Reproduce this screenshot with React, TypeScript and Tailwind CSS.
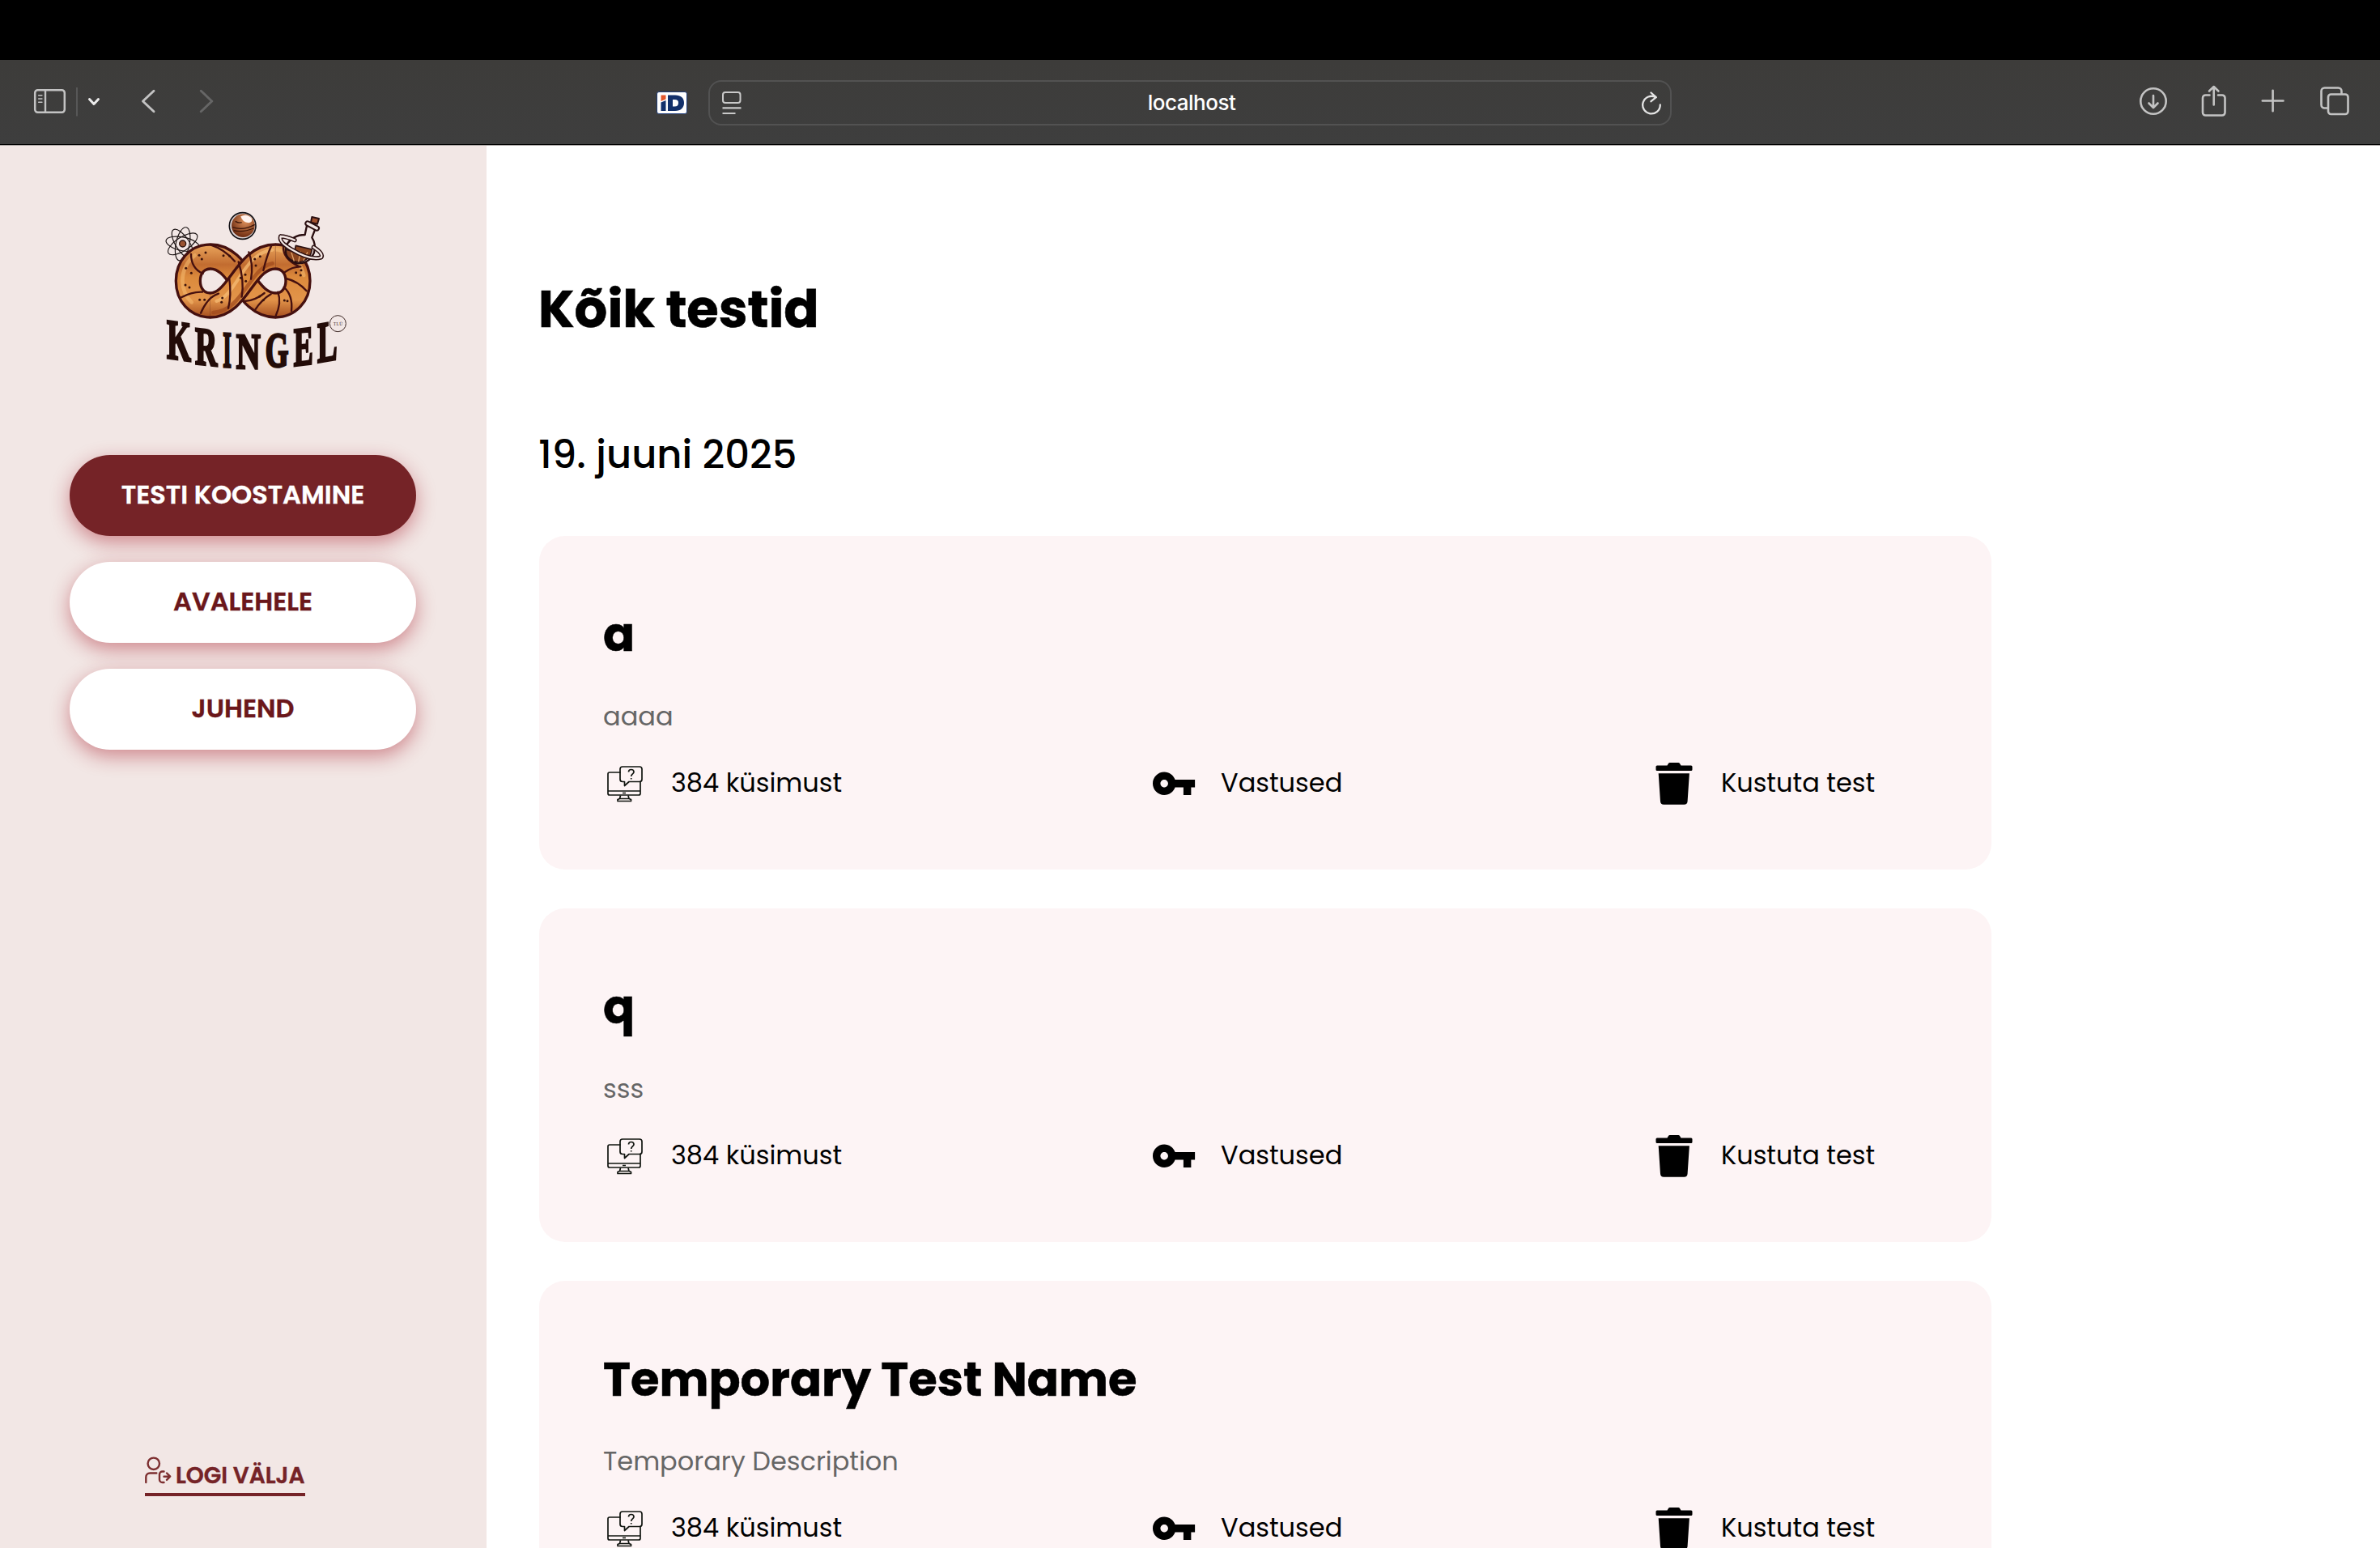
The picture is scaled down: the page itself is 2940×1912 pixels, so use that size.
import React from 'react';

function Logo({ className }: { className: string }) {
  const rope =
    'M481 411 C370 411 350 231 240 231 C190 231 157 270 157 321 C157 372 190 411 240 411';
  const right = 'M480 231 C530 231 564 270 564 321 C564 372 530 411 480 411';
  const over = 'M239 411 C345 411 365 231 481 231';
  const letters = [
    { c: 'K', x: 78, y: 606, w: 90, s: 209, k: 8 },
    { c: 'R', x: 183, y: 628, w: 82, s: 199, k: 6 },
    { c: 'I', x: 286, y: 639, w: 32, s: 189, k: 3 },
    { c: 'N', x: 335, y: 644, w: 90, s: 187, k: 1 },
    { c: 'G', x: 443, y: 640, w: 86, s: 181, k: -2 },
    { c: 'E', x: 548, y: 636, w: 72, s: 203, k: -7 },
    { c: 'L', x: 636, y: 623, w: 74, s: 213, k: -10 },
  ];
  return (
    <svg viewBox="0 0 810 720" className={className}>
      <defs>
        <linearGradient id="dough" gradientUnits="userSpaceOnUse" x1="0" y1="183" x2="0" y2="460">
          <stop offset="0" stopColor="#eca85e" />
          <stop offset="0.28" stopColor="#c26c30" />
          <stop offset="0.45" stopColor="#dc8a3c" />
          <stop offset="0.75" stopColor="#e2944a" />
          <stop offset="1" stopColor="#a24a1c" />
        </linearGradient>
        <radialGradient id="ball" cx="0.6" cy="0.3" r="0.7">
          <stop offset="0" stopColor="#e0925c" />
          <stop offset="1" stopColor="#6f2d12" />
        </radialGradient>
      </defs>
      <g fill="none" stroke="#1c1414" strokeWidth="3.5">
        {[12, 57, 102, 147].map((a) => (
          <ellipse key={a} cx="137" cy="184" rx="63" ry="25" transform={`rotate(${a} 137 184)`} />
        ))}
      </g>
      <circle cx="137" cy="183" r="12" fill="#9a5330" stroke="#2a1410" strokeWidth="4" />
      <circle cx="359" cy="117" r="49" fill="#d9d3d6" stroke="#141216" strokeWidth="5" />
      <circle cx="361" cy="116" r="43" fill="url(#ball)" />
      <path d="M352 82 q22 -12 40 6 q6 16 -10 18 q-24 -2 -30 -24z" fill="#fff3ee" />
      <path d="M322 122 q40 14 82 -10 M326 134 q34 8 74 -8 M332 100 q14 8 24 4" fill="none" stroke="#3b1509" strokeWidth="4" />
      <g fill="none" stroke="#45100f" strokeWidth="100">
        <path d={rope} />
        <path d={right} />
      </g>
      <g fill="none" stroke="url(#dough)" strokeWidth="80">
        <path d={rope} />
        <path d={right} />
      </g>
      <g fill="none" stroke="#f3b76c" strokeOpacity="0.6" strokeWidth="14" strokeLinecap="round">
        <path d="M182 226 Q138 260 136 320 Q138 370 170 400" />
        <path d="M470 204 Q560 206 586 300" />
      </g>
      <g fill="none">
        <path d={over} stroke="#45100f" strokeWidth="100" />
        <path d={over} stroke="url(#dough)" strokeWidth="80" />
        <path d="M262 396 C340 372 362 216 470 206" stroke="#f4b871" strokeWidth="12" strokeOpacity="0.8" strokeLinecap="round" />
        <path d="M250 438 C360 434 386 270 470 256" stroke="#9f481b" strokeWidth="14" strokeOpacity="0.7" strokeLinecap="round" />
      </g>
      <g fill="none" stroke="#45100f" strokeWidth="7" strokeLinecap="round">
        <path d="M168 222 q0 52 44 72" />
        <path d="M242 188 q50 16 88 60" />
        <path d="M132 382 q40 -22 78 -20" />
        <path d="M204 440 q26 -60 66 -72" />
        <path d="M310 314 q8 60 -4 108" />
        <path d="M344 250 q22 70 12 130" />
        <path d="M382 214 q18 50 8 100" />
        <path d="M466 190 q-18 40 -30 92" />
        <path d="M510 190 q-4 50 60 78 M574 268 q-30 0 -58 20" />
        <path d="M520 312 q44 10 76 46" />
        <path d="M512 344 q34 30 28 88" />
        <path d="M490 362 q14 40 -8 88" />
        <path d="M366 396 q40 -2 74 -30" />
        <path d="M404 430 q26 -40 60 -60" />
      </g>
      <g fill="#3a120b">
        {[
          [198, 226], [222, 216], [208, 240], [288, 227], [311, 229], [149, 274], [169, 292], [147, 336], [162, 345],
          [200, 391], [218, 391], [284, 384], [281, 400], [404, 240], [424, 230], [408, 264], [352, 310], [371, 322],
          [369, 298], [557, 290], [576, 281], [574, 300], [422, 378], [436, 392], [514, 393], [525, 395],
        ].map(([x, y], i) => (
          <circle key={i} cx={x} cy={y} r="4.5" />
        ))}
      </g>
      <g strokeLinejoin="round">
        <path d="M597 116 L590 150 Q545 150 520 190 Q510 240 560 256 Q606 258 624 216 Q632 184 616 160 L630 124z" fill="#f3e7e4" stroke="#2a0f10" strokeWidth="7" />
        <path d="M556 190 L616 204 Q612 244 566 252 Q516 244 520 204 Q540 212 552 208z" fill="#8a451f" stroke="#2a0f10" strokeWidth="5" />
        <path d="M540 216 l10 32 M574 212 l-8 38 M600 214 l-16 32" stroke="#e2a46c" strokeWidth="4" />
        <path d="M500 156 Q520 156 552 170 M622 196 Q660 220 650 234 Q610 246 540 204 Q492 176 500 156" fill="none" stroke="#2a0f10" strokeWidth="16" strokeLinecap="round" />
        <path d="M500 156 Q520 156 552 170 M622 196 Q660 220 650 234 Q610 246 540 204 Q492 176 500 156" fill="none" stroke="#f3e7e4" strokeWidth="7" strokeLinecap="round" />
        <path d="M600 108 L634 126" stroke="#2a0f10" strokeWidth="22" strokeLinecap="round" />
        <path d="M600 108 L634 126" stroke="#f3e7e4" strokeWidth="10" strokeLinecap="round" />
        <path d="M616 84 l26 6 l-6 20 l-24 -6z" fill="#a2522f" stroke="#2a0f10" strokeWidth="6" />
      </g>
      <g fill="#230c08" stroke="#230c08" strokeWidth="9" fontFamily="'Liberation Serif', serif" fontWeight="700">
        {letters.map((l) => (
          <text
            key={l.c}
            transform={`translate(${l.x} ${l.y}) skewY(${l.k})`}
            fontSize={l.s}
            textLength={l.w}
            lengthAdjust="spacingAndGlyphs"
          >
            {l.c}
          </text>
        ))}
      </g>
      <circle cx="712" cy="479" r="30" fill="none" stroke="#3a2522" strokeWidth="3" />
      <text x="713" y="485" fontSize="17" textAnchor="middle" fill="#3a2522" fontFamily="'Liberation Serif', serif" letterSpacing="1">
        TLÜ
      </text>
    </svg>
  );
}

function Toolbar() {
  return (
    <header className="flex h-[106px] shrink-0 items-center border-b border-[#a9a4a2] bg-[linear-gradient(#3d3c3a,#3e3e3e)] text-[#c3c3c3] shadow-[inset_0_-1px_0_#000]">
      <svg viewBox="0 74 300 106" className="h-[106px] w-[300px]" fill="none" stroke="currentColor" strokeLinecap="round" strokeLinejoin="round">
        <rect x="43.2" y="111.2" width="36.6" height="27.6" rx="3.5" strokeWidth="2.5" />
        <path d="M56 111V139" strokeWidth="2.4" strokeLinecap="butt" />
        <path d="M47.7 117.7h4.2M47.7 122h4.2M47.7 126.3h4.2" strokeWidth="1.6" />
        <path d="M95 108V143.5" stroke="#575757" strokeWidth="2" strokeLinecap="butt" />
        <path d="M110.5 122.5l5.5 6 5.5-6" stroke="#ececec" strokeWidth="3" />
        <path d="M190 112.3L176.5 125l13.5 12.7" strokeWidth="2.9" />
        <path d="M248.3 112.3L261.8 125l-13.5 12.7" stroke="#666" strokeWidth="2.9" />
      </svg>
      <div className="ml-[511px] flex h-7 w-[38px] items-center justify-center rounded-[3px] border border-[#1f3d7a] bg-white">
        <svg viewBox="0 0 36 26" className="h-[26px] w-9">
          <path d="M4.5 3.5h6v5l-6 2.5z" fill="#e2572b" />
          <path d="M4.5 12.5l6-2.5v13h-6z" fill="#12306b" />
          <path fillRule="evenodd" d="M13 3.5h9c7 0 11 3.5 11 9.5s-4 10-11 10h-9zM19 9v8.5h2.5c3 0 4.5-1.5 4.5-4.5s-1.5-4-4.5-4z" fill="#12306b" />
        </svg>
      </div>
      <div className="ml-[26px] flex h-14 w-[1190px] items-center justify-between rounded-2xl border-2 border-[#525252] pl-[11px] pr-[7px]">
        <svg viewBox="888 108 32 36" className="h-9 w-8" fill="none" stroke="#c9c9c9">
          <rect x="893" y="113" width="21.5" height="13" rx="3" strokeWidth="2" />
          <path d="M892.5 132.3h23M892.5 139h16" strokeWidth="2.2" />
        </svg>
        <span className="font-['Inter',sans-serif] text-[26px] font-medium leading-none tracking-[-0.5px] text-white">localhost</span>
        <svg viewBox="2024 108 32 36" className="h-9 w-8" fill="none" stroke="#e4e4e4" strokeWidth="2.3" strokeLinecap="round" strokeLinejoin="round">
          <path d="M2050.8 128.5a10.8 10.8 0 1 1-5.5-9.3M2039.5 113.5l6.3 5.7-6.3 5" />
        </svg>
      </div>
      <svg viewBox="2630 74 290 106" className="ml-auto mr-5 h-[106px] w-[290px]" fill="none" stroke="currentColor" strokeWidth="2.6" strokeLinecap="round" strokeLinejoin="round">
        <circle cx="2660" cy="125" r="15.7" />
        <path d="M2660 118v14.5M2654.5 127.5l5.5 5.5 5.5-5.5" />
        <path d="M2729.5 117.5h-5a3.5 3.5 0 0 0-3.5 3.5v18a3.5 3.5 0 0 0 3.5 3.5h20.5a3.5 3.5 0 0 0 3.5-3.5v-18a3.5 3.5 0 0 0-3.5-3.5h-5M2734.7 129.5v-22M2729 112.5l5.7-5.5 5.7 5.5" />
        <path d="M2794.8 124.5h25.7M2807.6 111.8v25.5" />
        <rect x="2876" y="116.5" width="24.5" height="24.5" rx="3.5" />
        <path d="M2875 133.5h-3.5a4 4 0 0 1-4-4V112.5a4 4 0 0 1 4-4h17a4 4 0 0 1 4 4v3" />
      </svg>
    </header>
  );
}

function NavButton({ label, active = false }: { label: string; active?: boolean }) {
  return (
    <button
      className={`flex h-[100px] w-[428px] items-center justify-center rounded-[50px] pb-0.5 text-[32px] font-semibold leading-none shadow-[0_8px_24px_rgba(165,20,35,0.45)] [-webkit-text-stroke:0.4px] ${
        active ? 'bg-[#752327] text-white' : 'bg-white text-[#6b171b]'
      }`}
    >
      {label}
    </button>
  );
}

function Sidebar() {
  return (
    <aside className="flex w-[601px] shrink-0 flex-col bg-[#f2e7e5] pt-[60px]">
      <Logo className="ml-[180px] h-[240px] w-[270px] shrink-0" />
      <nav className="ml-[86px] mt-[82px] flex flex-col gap-8">
        <NavButton label="TESTI KOOSTAMINE" active />
        <NavButton label="AVALEHELE" />
        <NavButton label="JUHEND" />
      </nav>
      <a className="mb-16 ml-[179px] mt-auto flex h-[50px] w-[198px] border-b-4 border-[#752327] text-[#752327]">
        <svg viewBox="179 1798 38 46" className="h-[46px] w-[38px] shrink-0" fill="none" stroke="#7d2f30" strokeWidth="2.4" strokeLinecap="round" strokeLinejoin="round">
          <circle cx="189.8" cy="1807.8" r="7.2" />
          <path d="M180.3 1831v-6.5a5 5 0 0 1 5-5h8" />
          <path d="M202.5 1817.5h-2a3.5 3.5 0 0 0-3.5 3.5v6.5a3.5 3.5 0 0 0 3.5 3.5h2M202.5 1823.7h7.5M206 1819.5l4.2 4.2-4.2 4.2" />
        </svg>
        <span className="pt-[11px] text-[28px] font-semibold leading-none whitespace-nowrap [-webkit-text-stroke:0.4px]">LOGI VÄLJA</span>
      </a>
    </aside>
  );
}

function QuestionsIcon() {
  return (
    <svg viewBox="746 936 56 60" className="h-[60px] w-14" fill="none" stroke="#10140f" strokeWidth="1.7" strokeLinejoin="round">
      <path d="M766.5 954h-13.5a2 2 0 0 0-2 2v24a2 2 0 0 0 2 2h36a2 2 0 0 0 2-2v-15M751 977h40" />
      <path d="M769 947h21a3 3 0 0 1 3 3v12.5a3 3 0 0 1-3 3h-13l-5.5 5v-5h-2.500a3 3 0 0 1-3-3V950a3 3 0 0 1 3-3z" />
      <path d="M776.5 953.5c0-4 6.5-4 6.5 0 0 2.5-3.3 2.5-3.3 5.5M779.7 961v1.500" />
      <path d="M766.5 982.5l-1 4-2.5 1v2h16.5v-2l-2.5-1-1-4M765.5 986.5h11.5M769 979.5h4" />
    </svg>
  );
}

function KeyIcon() {
  return (
    <svg viewBox="1420 936 60 60" className="h-[60px] w-[60px]">
      <path
        transform="translate(1421.6 939.4) scale(2.37)"
        d="M12.65 10C11.83 7.67 9.61 6 7 6c-3.31 0-6 2.69-6 6s2.69 6 6 6c2.61 0 4.83-1.67 5.65-4H17v4h4v-4h2v-4H12.65zM7 14c-1.1 0-2-.9-2-2s.9-2 2-2 2 .9 2 2-.9 2-2 2z"
      />
    </svg>
  );
}

function TrashIcon() {
  return (
    <svg viewBox="2040 936 56 60" className="h-[60px] w-14">
      <path d="M2047 945.5h12.5l1.5-2.5a2 2 0 0 1 1.7-1h10.6a2 2 0 0 1 1.7 1l1.5 2.5H2089a1.5 1.5 0 0 1 1.5 1.5v3.5a1.5 1.5 0 0 1-1.5 1.5h-42a1.5 1.5 0 0 1-1.5-1.5V947a1.5 1.5 0 0 1 1.5-1.5z" />
      <path d="M2048.7 955.3h38.2l-2.3 34.5a4.2 4.2 0 0 1-4.2 3.9h-25.2a4.2 4.2 0 0 1-4.2-3.9z" />
    </svg>
  );
}

function TestCard({ title, desc }: { title: string; desc: string }) {
  return (
    <section className="h-[412px] w-[1794px] shrink-0 rounded-[32px] bg-[#fdf4f5] pl-[79px] pt-[93px]">
      <h3 className="text-[57.6px] font-bold leading-[58px] [-webkit-text-stroke:0.5px_black]">{title}</h3>
      <p className="mt-14 text-[32px] leading-8 text-[#666]">{desc}</p>
      <div className="ml-px mt-[35px] flex h-[60px] items-center text-[32px] leading-8">
        <div className="flex w-[674px] items-center">
          <QuestionsIcon />
          <span className="ml-[27px] pt-0.5">384 küsimust</span>
        </div>
        <div className="flex w-[620px] items-center">
          <KeyIcon />
          <span className="ml-7 pt-0.5">Vastused</span>
        </div>
        <div className="flex items-center">
          <TrashIcon />
          <span className="ml-[30px] pt-0.5">Kustuta test</span>
        </div>
      </div>
    </section>
  );
}

export default function App() {
  return (
    <div className="flex h-[1912px] w-[2940px] flex-col overflow-hidden bg-white font-['Poppins',sans-serif] text-black">
      <div className="h-[74px] shrink-0 bg-black" />
      <Toolbar />
      <div className="flex min-h-0 flex-1">
        <Sidebar />
        <main className="flex flex-1 flex-col overflow-hidden pl-[65px] pt-[170px]">
          <h1 className="-ml-px text-[64px] font-bold leading-[64px] [-webkit-text-stroke:0.6px_black]">Kõik testid</h1>
          <h2 className="-ml-px mt-[124px] text-[48px] font-medium leading-[48px]">19. juuni 2025</h2>
          <div className="mt-[76px] flex flex-col gap-12">
            <TestCard title="a" desc="aaaa" />
            <TestCard title="q" desc="sss" />
            <TestCard title="Temporary Test Name" desc="Temporary Description" />
          </div>
        </main>
      </div>
    </div>
  );
}
